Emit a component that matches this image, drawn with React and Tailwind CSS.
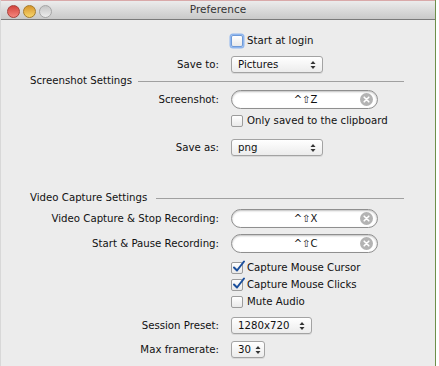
import React from "react";

const font = { fontFamily: '"DejaVu Sans", "Liberation Sans", sans-serif' };

function Arrows() {
  return (
    <svg width="6" height="10" viewBox="0 0 6 10" className="shrink-0">
      <path d="M0.5 4 L3 1 L5.5 4 Z" fill="#333" />
      <path d="M0.5 6 L3 9 L5.5 6 Z" fill="#333" />
    </svg>
  );
}

function Popup({ value, w }) {
  return (
    <div
      className={`h-[17px] ${w} flex items-center justify-between gap-[4px] pl-[6px] pr-[6px] rounded-[3px] border border-[#a3a3a3] bg-gradient-to-b from-[#ffffff] to-[#ececec] shadow-[0_1px_0_rgba(0,0,0,0.08)] text-[10.2px] text-[#111]`}
    >
      <span>{value}</span>
      <Arrows />
    </div>
  );
}

function Shortcut({ keyName }) {
  return (
    <div className="relative h-[19px] w-[147px] rounded-full border border-[#8f8f8f] bg-white shadow-[inset_0_1px_2px_rgba(0,0,0,0.25)] flex items-center justify-center text-[10px] text-[#111]">
      <span className="pl-[2px]">^⇧{keyName}</span>
      <svg
        width="13"
        height="13"
        viewBox="0 0 13 13"
        className="absolute right-[4px] top-[2px]"
      >
        <circle cx="6.5" cy="6.5" r="6.5" fill="#b3b3b3" />
        <path d="M4.2 4.2 L8.8 8.8 M8.8 4.2 L4.2 8.8" stroke="#fff" strokeWidth="1.6" strokeLinecap="round" />
      </svg>
    </div>
  );
}

function Checkbox({ label, checked, focus }) {
  return (
    <div className="flex items-center h-[16px] text-[10.2px] text-[#111]">
      <div
        className={`relative w-[12px] h-[12px] rounded-[2px] border bg-gradient-to-b from-[#ffffff] to-[#e9e9e9] ${
          focus
            ? "border-[#6f9ad8] shadow-[0_0_0_1.5px_#8fb6ee]"
            : "border-[#9c9c9c]"
        }`}
      >
        {checked && (
          <svg width="14" height="14" viewBox="0 0 14 14" className="absolute left-[0px] top-[-3px]">
            <path d="M2 7.5 L5 10.5 L12 1.5" fill="none" stroke="#1b4f9c" strokeWidth="2" strokeLinecap="round" strokeLinejoin="round" />
          </svg>
        )}
      </div>
      <span className="ml-[4px]">{label}</span>
    </div>
  );
}

function Row({ label, children, className = "" }) {
  return (
    <div className={`flex items-center ${className}`}>
      <div className="w-[219px] shrink-0 text-right text-[10.2px] text-[#111] pr-[1px]">{label}</div>
      <div className="ml-[11px] flex items-center">{children}</div>
    </div>
  );
}

function Heading({ title, lineStart, className = "" }) {
  return (
    <div className={`flex items-center h-[16px] ${className}`}>
      <div className="pl-[29px] text-[10.2px] text-[#111]" style={{ width: lineStart }}>{title}</div>
      <div className="h-px bg-[#a0a0a0] flex-1 mr-[31px]" />
    </div>
  );
}

export default function App() {
  return (
    <div className="w-[439px] h-[366px] bg-white flex" style={font}>
      <div className="w-[436px] h-[366px] flex flex-col bg-[#ececec] border-r border-[#6e8f4a] border-l border-l-[#d8d8d8]">
        <div className="h-[20px] shrink-0 relative flex items-center justify-center bg-gradient-to-b from-[#ececec] to-[#c9c9c9] border-b border-[#7a7a7a] border-t border-t-[#d9a9a9]">
          <div className="absolute left-[6px] top-[4px] flex gap-[3px]">
            <div className="w-[13px] h-[13px] rounded-full bg-gradient-to-b from-[#d2413b] to-[#f5847c] border border-[#a8403a]" />
            <div className="w-[13px] h-[13px] rounded-full bg-gradient-to-b from-[#d7962a] to-[#f7d56a] border border-[#a57c2c]" />
            <div className="w-[13px] h-[13px] rounded-full bg-gradient-to-b from-[#c5c5c5] to-[#ececec] border border-[#a5a5a5]" />
          </div>
          <span className="text-[10.5px] text-[#333]">Preference</span>
        </div>

        <Row label="" className="mt-[13px] h-[16px]">
          <Checkbox label="Start at login" focus />
        </Row>
        <Row label="Save to:" className="mt-[7px] h-[17px]">
          <Popup value="Pictures" w="w-[92px]" />
        </Row>
        <Heading title="Screenshot Settings" lineStart={137} className="mt-[0px]" />
        <Row label="Screenshot:" className="mt-[1px] h-[19px]">
          <Shortcut keyName="Z" />
        </Row>
        <Row label="" className="mt-[4px] h-[16px]">
          <Checkbox label="Only saved to the clipboard" />
        </Row>
        <Row label="Save as:" className="mt-[10px] h-[17px]">
          <Popup value="png" w="w-[92px]" />
        </Row>
        <Heading title="Video Capture Settings" lineStart={155} className="mt-[34px]" />
        <Row label="Video Capture & Stop Recording:" className="mt-[3px] h-[19px]">
          <Shortcut keyName="X" />
        </Row>
        <Row label="Start & Pause Recording:" className="mt-[6px] h-[19px]">
          <Shortcut keyName="C" />
        </Row>
        <Row label="" className="mt-[7px] h-[16px]">
          <Checkbox label="Capture Mouse Cursor" checked />
        </Row>
        <Row label="" className="mt-[1px] h-[16px]">
          <Checkbox label="Capture Mouse Clicks" checked />
        </Row>
        <Row label="" className="mt-[1px] h-[16px]">
          <Checkbox label="Mute Audio" />
        </Row>
        <Row label="Session Preset:" className="mt-[7px] h-[17px]">
          <Popup value="1280x720" w="w-[81px]" />
        </Row>
        <Row label="Max framerate:" className="mt-[7px] h-[17px]">
          <Popup value="30" w="w-[34px]" />
        </Row>
      </div>
    </div>
  );
}
